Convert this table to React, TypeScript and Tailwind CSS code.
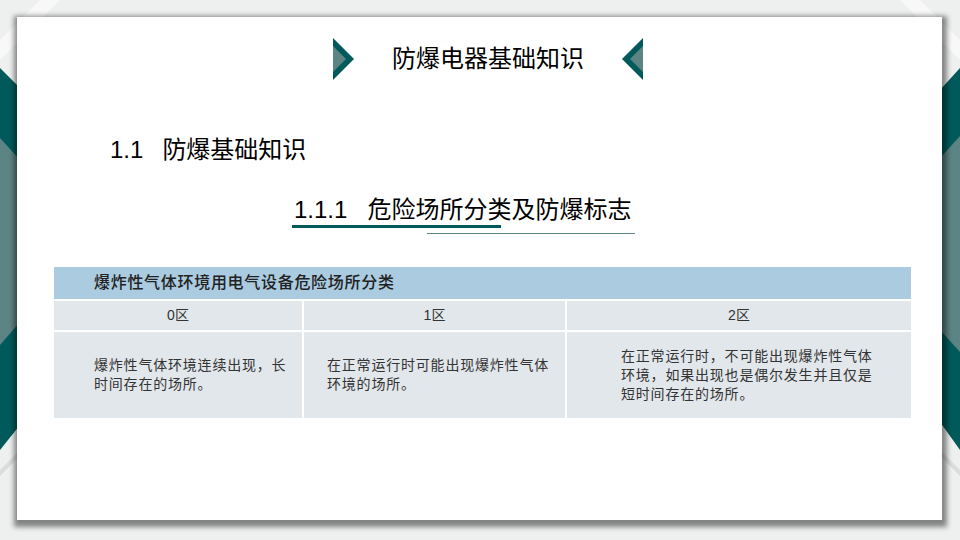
import React from 'react';

const cjk = '"Liberation Sans", "Noto Sans CJK SC", sans-serif';

function Backdrop() {
    return (
        <svg className="absolute inset-0" width="960" height="540" viewBox="0 0 960 540">
            <rect width="960" height="540" fill="#eeefef" />
            <path d="M40 0 L0 40 L0 60 L60 0 Z" fill="#f8f8f8" />
            <path d="M900 0 L960 60 L960 40 L920 0 Z" fill="#f8f8f8" />
            <path d="M0 470 L40 430 L40 436 L0 476 Z" fill="#dcdcdc" />
            <path d="M960 470 L920 430 L920 436 L960 476 Z" fill="#dcdcdc" />
            {/* left chevron band */}
            <polygon points="0,68 20,88 20,425 0,450" fill="#005a5b" />
            <polygon points="0,138 20,160 20,322 0,345" fill="#5d8484" />
            {/* right chevron band */}
            <polygon points="960,68 940,90 940,422 960,450" fill="#005a5b" />
            <polygon points="960,136 940,158 940,330 960,352" fill="#5d8484" />
        </svg>
    );
}

function Arrow({ dir }: { dir: 'right' | 'left' }) {
    return (
        <svg width="22" height="42" viewBox="0 0 22 42" className={dir === 'left' ? '-scale-x-100' : ''}>
            <polygon points="0,0 21,21 0,42" fill="#005a5b" />
            <polygon points="0,8 13,21 0,34" fill="#5d8484" />
        </svg>
    );
}

const rows = [
    { zone: '0区', text: ['爆炸性气体环境连续出现，长', '时间存在的场所。'], pad: 'pl-[40px]' },
    { zone: '1区', text: ['在正常运行时可能出现爆炸性气体', '环境的场所。'], pad: 'pl-[23px]' },
    { zone: '2区', text: ['在正常运行时，不可能出现爆炸性气体', '环境，如果出现也是偶尔发生并且仅是', '短时间存在的场所。'], pad: 'pl-[54px]' },
];

export default function App() {
    return (
        <div className="relative w-[960px] h-[540px] overflow-hidden" style={{ fontFamily: cjk }}>
            <Backdrop />
            <div className="relative pt-[17px] pl-[17px]">
                <div className="w-[925px] h-[503px] bg-white shadow-[1px_3px_5px_4px_rgba(0,0,0,0.45)] flex flex-col">
                    <div className="mt-[21px] h-[42px] pl-[316px] flex items-center">
                        <Arrow dir="right" />
                        <div className="ml-[37px] text-[24px] leading-[42px] text-black">防爆电器基础知识</div>
                        <div className="ml-[37px]">
                            <Arrow dir="left" />
                        </div>
                    </div>

                    <div className="mt-[54px] pl-[93px] text-[24px] leading-[32px] text-black flex">
                        <span>1.1</span>
                        <span className="ml-[19px]">防爆基础知识</span>
                    </div>

                    <div className="mt-[29px] pl-[277px] text-[24px] leading-[30px] text-black flex">
                        <span>1.1.1</span>
                        <span className="ml-[20px]">危险场所分类及防爆标志</span>
                    </div>
                    <div className="ml-[275px] w-[209px] h-[3px] bg-[#005a5b]" />
                    <div className="mt-[5px] ml-[410px] w-[208px] h-px bg-[#5d8484]" />

                    <div className="mt-[33px] ml-[37px] w-[857px] grid grid-cols-[248px_261px_344px] gap-[2px] text-[#333]">
                        <div className="col-span-3 h-[32px] bg-[#abcbe1] pl-[40px] flex items-center text-[16px] tracking-[0.7px] font-medium text-[#222]">
                            爆炸性气体环境用电气设备危险场所分类
                        </div>
                        {rows.map((r) => (
                            <div key={r.zone} className="h-[29px] bg-[#e2e7eb] flex items-center justify-center text-[14px]">
                                {r.zone}
                            </div>
                        ))}
                        {rows.map((r) => (
                            <div key={r.zone + 't'} className={`h-[86px] bg-[#e2e7eb] flex flex-col justify-center text-[14px] leading-[19px] tracking-[0.8px] ${r.pad}`}>
                                {r.text.map((t) => (
                                    <span key={t}>{t}</span>
                                ))}
                            </div>
                        ))}
                    </div>
                </div>
            </div>
        </div>
    );
}
